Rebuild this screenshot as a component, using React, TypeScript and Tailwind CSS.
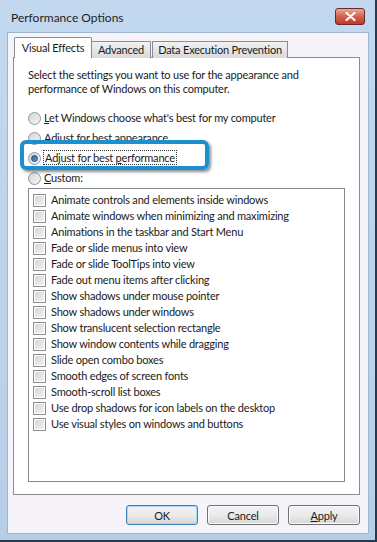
const OPTIONS = [
  "Animate controls and elements inside windows",
  "Animate windows when minimizing and maximizing",
  "Animations in the taskbar and Start Menu",
  "Fade or slide menus into view",
  "Fade or slide ToolTips into view",
  "Fade out menu items after clicking",
  "Show shadows under mouse pointer",
  "Show shadows under windows",
  "Show translucent selection rectangle",
  "Show window contents while dragging",
  "Slide open combo boxes",
  "Smooth edges of screen fonts",
  "Smooth-scroll list boxes",
  "Use drop shadows for icon labels on the desktop",
  "Use visual styles on windows and buttons",
];

function Radio({ checked, children }: { checked?: boolean; children: React.ReactNode }) {
  return (
    <div className="flex items-center h-[20px]">
      <span className="w-[13px] h-[13px] rounded-full border border-[#8d9aa8] bg-gradient-to-br from-[#d4d4d4] to-[#f6f6f6] flex items-center justify-center shrink-0">
        {checked && (
          <span className="w-[7px] h-[7px] rounded-full bg-gradient-to-br from-[#2a5f8e] to-[#5ea3d8] border border-[#1e4f7e]" />
        )}
      </span>
      <span className="ml-[3px]">{children}</span>
    </div>
  );
}

function Checkbox({ label }: { label: string }) {
  return (
    <div className="flex items-center h-[16px]">
      <span className="w-[13px] h-[13px] border border-[#8f8f8f] bg-white p-[1px] shrink-0">
        <span className="block w-full h-full bg-gradient-to-br from-[#d5d5d5] to-[#f3f3f3]" />
      </span>
      <span className="ml-[5px] whitespace-nowrap">{label}</span>
    </div>
  );
}

function Button({ children, primary }: { children: React.ReactNode; primary?: boolean }) {
  return (
    <button
      className={
        "w-[72px] h-[20px] rounded-[3px] border leading-none bg-gradient-to-b from-[#f2f2f2] via-[#ebebeb] to-[#d6d6d6] " +
        (primary ? "border-[#3c7fb1] shadow-[inset_0_0_0_1px_#a8dcf5]" : "border-[#707070] shadow-[inset_0_0_0_1px_#fbfbfb]")
      }
    >
      {children}
    </button>
  );
}

export default function App() {
  return (
    <div
      className="w-[377px] h-[542px] flex flex-col bg-gradient-to-b from-[#c2d8ee] to-[#b6cfe8] border-r-2 border-b-2 border-[#2a3a4a] text-[#1a1a1a] text-[11px] tracking-[-0.2px] leading-[14px]"
      style={{ fontFamily: 'Lato, "Liberation Sans", sans-serif' }}
    >
      {/* title bar */}
      <div className="h-[32px] flex items-center justify-between pl-[11px] pr-[10px] shrink-0">
        <span className="text-[12px] tracking-normal text-[#1e1e1e] pt-[3px]">Performance Options</span>
        <div className="w-[30px] h-[17px] rounded-[3px] border border-[#6b2a25] bg-gradient-to-b from-[#e9a99a] via-[#d0624e] to-[#c0392b] flex items-center justify-center">
          <svg width="11" height="9" viewBox="0 0 11 9">
            <path d="M1.5 1 L9.5 8 M9.5 1 L1.5 8" stroke="#fff" strokeWidth="2.2" strokeLinecap="round" />
          </svg>
        </div>
      </div>

      {/* client area */}
      <div className="flex-1 ml-[7px] mr-[6px] bg-[#f6f4f8] border border-[#9fb6cf] flex flex-col px-[5px] pt-[4px]">
        {/* tabs */}
        <div className="flex items-end h-[21px] relative z-10">
          <div className="w-[78px] h-[21px] flex items-center justify-center bg-white border border-b-0 border-[#898c95] rounded-t-[2px] ml-px">
            Visual Effects
          </div>
          <div className="w-[59px] h-[17px] flex items-center justify-center bg-gradient-to-b from-[#f2f2f2] to-[#d9d9d9] border border-l-0 border-b-0 border-[#898c95]">
            Advanced
          </div>
          <div className="w-[136px] h-[17px] flex items-center justify-center bg-gradient-to-b from-[#f2f2f2] to-[#d9d9d9] border border-b-0 border-[#898c95] ml-px">
            Data Execution Prevention
          </div>
        </div>

        {/* panel */}
        <div className="-mt-px w-[347px] h-[438px] bg-white border border-[#898c95] px-[14px] pt-[10px] relative">
          <p>
            Select the settings you want to use for the appearance and performance of Windows on this computer.
          </p>
          <div className="mt-[12px]">
            <Radio>
              <span className="underline">L</span>et Windows choose what's best for my computer
            </Radio>
            <Radio>Adjust for best appearance</Radio>
            <Radio checked>
              <span className="outline-1 outline-dotted outline-[#333] px-px">
                Adjust for best <span className="underline">p</span>erformance
              </span>
            </Radio>
            <Radio>
              <span className="underline">C</span>ustom:
            </Radio>
          </div>

          <div className="h-[294px] border border-[#828790] pl-[4px] pt-[3px]">
            {OPTIONS.map((o) => (
              <Checkbox key={o} label={o} />
            ))}
          </div>

          {/* highlight marker drawn over the dialog */}
          <div className="absolute left-[6px] top-[82px] w-[189px] h-[30px] rounded-[6px] border-[4px] border-[#1c8fcf] shadow-[2px_2px_3px_rgba(0,0,0,0.45)]" />
        </div>

        {/* buttons */}
        <div className="flex justify-end gap-[9px] mt-[10px] pr-[3px]">
          <Button primary>OK</Button>
          <Button>Cancel</Button>
          <Button>
            <span className="underline">A</span>pply
          </Button>
        </div>
      </div>
      <div className="h-[6px] shrink-0" />
    </div>
  );
}
